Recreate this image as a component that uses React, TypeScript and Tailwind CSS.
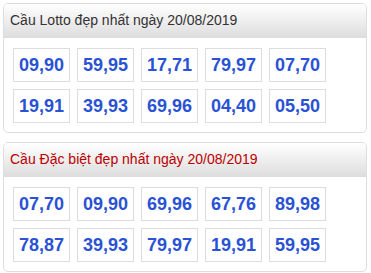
type TCau = {
  title: string;
  titleColor: string;
  rows: Array<Array<string>>;
};

const cauList: Array<TCau> = [
  {
    title: "Cầu Lotto đẹp nhất ngày 20/08/2019",
    titleColor: "text-[#333333]",
    rows: [
      ["09,90", "59,95", "17,71", "79,97", "07,70"],
      ["19,91", "39,93", "69,96", "04,40", "05,50"],
    ],
  },
  {
    title: "Cầu Đặc biệt đẹp nhất ngày 20/08/2019",
    titleColor: "text-[#bb0000]",
    rows: [
      ["07,70", "09,90", "69,96", "67,76", "89,98"],
      ["78,87", "39,93", "79,97", "19,91", "59,95"],
    ],
  },
];

export default function App() {
  return (
    <div className="w-[371px] h-[273px] bg-white pl-[3px] pt-[3px] flex flex-col gap-[9px] font-['Liberation_Sans',Arial,sans-serif]">
      {cauList.map(cau => (
        <section key={cau.title} className="w-[364px] border border-[#dddddd] rounded-[5px] overflow-hidden">
          <div className="h-[34px] flex items-center pl-[6px] border-b border-[#dddddd] bg-gradient-to-b from-white to-[#dedede]">
            <h2 className={`text-[14px] ${cau.titleColor}`}>{cau.title}</h2>
          </div>
          <div className="pl-[9px] pt-[10px] pb-[9px] flex flex-col gap-[7px]">
            {cau.rows.map((row, i) => (
              <div key={i} className="flex gap-[7px]">
                {row.map(num => (
                  <div
                    key={num}
                    className="w-[57px] h-[34px] border border-[#dddddd] flex items-center justify-center text-[18px] font-bold text-[#2a52d4]"
                  >
                    {num}
                  </div>
                ))}
              </div>
            ))}
          </div>
        </section>
      ))}
    </div>
  );
}
